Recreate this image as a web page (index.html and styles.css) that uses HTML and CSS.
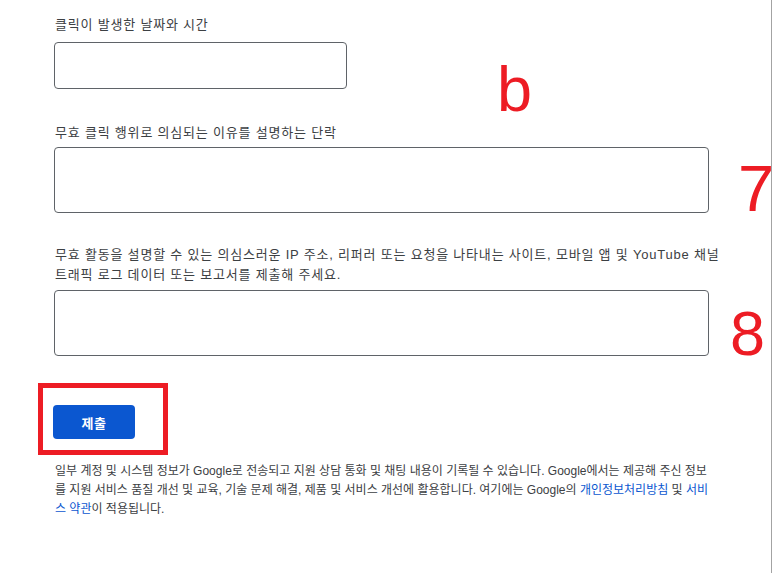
FILE: index.html
```html
<!DOCTYPE html>
<html lang="ko">
<head>
    <meta charset="utf-8">
    <title>무효 클릭 신고</title>
    <link rel="stylesheet" href="styles.css">
</head>
<body>
    <div class="page">
        <form class="report-form" onsubmit="return false;">
            <div class="field field-first">
                <label for="clickTime">클릭이 발생한 날짜와 시간</label>
                <input type="text" id="clickTime" class="input-short">
            </div>

            <div class="field field-reason">
                <label for="reason">무효 클릭 행위로 의심되는 이유를 설명하는 단락</label>
                <textarea id="reason" class="input-wide"></textarea>
            </div>

            <div class="field field-logs">
                <label for="logs">무효 활동을 설명할 수 있는 의심스러운 IP 주소, 리퍼러 또는 요청을 나타내는 사이트, 모바일 앱 및 YouTube 채널 트래픽 로그 데이터 또는 보고서를 제출해 주세요.</label>
                <textarea id="logs" class="input-wide"></textarea>
            </div>

            <div class="submit-mark">
                <button type="submit" class="submit-btn">제출</button>
            </div>
        </form>

        <p class="disclaimer">일부 계정 및 시스템 정보가 Google로 전송되고 지원 상담 통화 및 채팅 내용이 기록될 수 있습니다. Google에서는 제공해 주신 정보를 지원 서비스 품질 개선 및 교육, 기술 문제 해결, 제품 및 서비스 개선에 활용합니다. 여기에는 Google의 <a href="#">개인정보처리방침</a> 및 <a href="#">서비스 약관</a>이 적용됩니다.</p>

        <span class="mark mark-6">b</span>
        <span class="mark mark-7">7</span>
        <span class="mark mark-8">8</span>
    </div>
</body>
</html>
```

FILE: styles.css
```css
body {
    margin: 0;
    background: #fff;
    color: #3c4043;
    font-family: "Liberation Sans", "Noto Sans CJK KR", sans-serif;
}
.page {
    position: relative;
    width: 772px;
    height: 573px;
    box-sizing: border-box;
    border-right: 1px solid #a3a3a3;
    padding: 15px 0 0 54px;
}
.report-form {
    display: flex;
    flex-direction: column;
    align-items: flex-start;
}
.field {
    display: flex;
    flex-direction: column;
    align-items: flex-start;
}
.field label {
    width: 670px;
    font-size: 13px;
    letter-spacing: 0.8px;
    line-height: 20px;
    padding-left: 1px;
    margin-bottom: 4px;
}
.field-first label {
    margin-bottom: 7px;
}
.field-reason {
    margin-top: 34px;
}
.field-logs {
    margin-top: 32px;
}
.field-logs label {
    margin-bottom: 5px;
}
.input-short,
.input-wide {
    box-sizing: border-box;
    border: 1px solid #5f6368;
    border-radius: 4px;
    background: #fff;
    font: inherit;
    resize: none;
    outline: none;
}
.input-short {
    width: 293px;
    height: 47px;
}
.input-wide {
    width: 655px;
    height: 66px;
}
.submit-mark {
    margin: 27px 0 0 -16px;
    border: 5px solid #ed1c24;
    padding: 17px 28px 11px 10px;
}
.submit-btn {
    display: block;
    width: 82px;
    height: 34px;
    border: none;
    border-radius: 4px;
    background: #0b57d0;
    color: #fff;
    font-family: inherit;
    font-size: 13px;
    font-weight: bold;
    letter-spacing: 0.5px;
    cursor: pointer;
}
.disclaimer {
    width: 657px;
    margin: 7px 0 0 1px;
    font-size: 12px;
    line-height: 19px;
}
.disclaimer a {
    color: #0b57d0;
    text-decoration: none;
}
.mark {
    position: absolute;
    color: #ed1c24;
    line-height: 1;
    font-family: "Liberation Sans", sans-serif;
}
.mark-6 {
    left: 497px;
    top: 58px;
    font-size: 63px;
}
.mark-7 {
    left: 738px;
    top: 156px;
    font-size: 65px;
}
.mark-8 {
    left: 730px;
    top: 302px;
    font-size: 63px;
}
```
